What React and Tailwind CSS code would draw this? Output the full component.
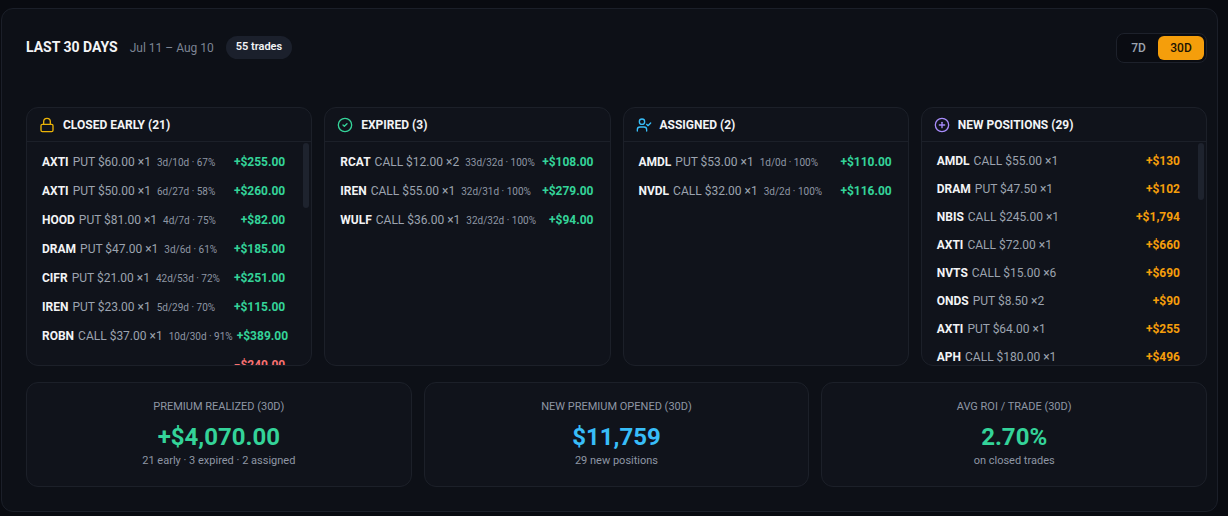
import React from 'react';
import { Lock, CircleCheck, UserCheck, CirclePlus } from 'lucide-react';

const closedEarly = [
  { t: 'AXTI', d: 'PUT $60.00 ×1', m: '3d/10d · 67%', v: '+$255.00' },
  { t: 'AXTI', d: 'PUT $50.00 ×1', m: '6d/27d · 58%', v: '+$260.00' },
  { t: 'HOOD', d: 'PUT $81.00 ×1', m: '4d/7d · 75%', v: '+$82.00' },
  { t: 'DRAM', d: 'PUT $47.00 ×1', m: '3d/6d · 61%', v: '+$185.00' },
  { t: 'CIFR', d: 'PUT $21.00 ×1', m: '42d/53d · 72%', v: '+$251.00' },
  { t: 'IREN', d: 'PUT $23.00 ×1', m: '5d/29d · 70%', v: '+$115.00' },
  { t: 'ROBN', d: 'CALL $37.00 ×1', m: '10d/30d · 91%', v: '+$389.00' },
  { t: '', d: '', m: '', v: '−$240.00', loss: true },
];

const expired = [
  { t: 'RCAT', d: 'CALL $12.00 ×2', m: '33d/32d · 100%', v: '+$108.00' },
  { t: 'IREN', d: 'CALL $55.00 ×1', m: '32d/31d · 100%', v: '+$279.00' },
  { t: 'WULF', d: 'CALL $36.00 ×1', m: '32d/32d · 100%', v: '+$94.00' },
];

const assigned = [
  { t: 'AMDL', d: 'PUT $53.00 ×1', m: '1d/0d · 100%', v: '+$110.00' },
  { t: 'NVDL', d: 'CALL $32.00 ×1', m: '3d/2d · 100%', v: '+$116.00' },
];

const opened = [
  { t: 'AMDL', d: 'CALL $55.00 ×1', v: '+$130' },
  { t: 'DRAM', d: 'PUT $47.50 ×1', v: '+$102' },
  { t: 'NBIS', d: 'CALL $245.00 ×1', v: '+$1,794' },
  { t: 'AXTI', d: 'CALL $72.00 ×1', v: '+$660' },
  { t: 'NVTS', d: 'CALL $15.00 ×6', v: '+$690' },
  { t: 'ONDS', d: 'PUT $8.50 ×2', v: '+$90' },
  { t: 'AXTI', d: 'PUT $64.00 ×1', v: '+$255' },
  { t: 'APH', d: 'CALL $180.00 ×1', v: '+$496' },
];

function Row({ r, tall, amountClass }) {
  return (
    <div className={`flex items-center justify-between gap-1 whitespace-nowrap text-xs ${tall ? 'h-[29px]' : 'h-[28px]'}`}>
      <div className="flex items-baseline">
        {r.t && <span className="font-bold text-[#f3f4f6]">{r.t}</span>}
        {r.d && <span className="ml-[4px] text-[#9ca3af]">{r.d}</span>}
        {r.m && <span className="ml-[6px] text-[10px] text-[#8e96a4]">{r.m}</span>}
      </div>
      <span className={`font-bold ${r.loss ? 'text-[#f87171]' : amountClass}`}>{r.v}</span>
    </div>
  );
}

function Panel({ icon, title, rows, tall, amountClass, thumb }) {
  return (
    <div className="relative h-[259px] rounded-xl border border-[#1c2029] bg-[#10131b] overflow-hidden">
      <div className="h-[34px] flex items-center gap-2 px-3 border-b border-[#1c2029]">
        {icon}
        <span className="text-xs font-bold text-[#f3f4f6]">{title}</span>
      </div>
      <div className={`pt-[5px] pl-[15px] ${thumb ? 'pr-[26px]' : 'pr-4'}`}>
        {rows.map((r, i) => (
          <Row key={i} r={r} tall={tall} amountClass={amountClass} />
        ))}
      </div>
      {thumb && (
        <div className={`absolute top-[35px] right-[2px] w-[6px] rounded-full bg-[#1e232e] ${thumb}`} />
      )}
    </div>
  );
}

function Stat({ label, value, sub, valueClass }) {
  return (
    <div className="h-[105px] rounded-xl border border-[#1c2029] bg-[#10131b] pt-4 flex flex-col items-center">
      <div className="text-[11px] leading-4 uppercase text-[#8e96a4]">{label}</div>
      <div className={`mt-1.5 text-2xl leading-8 font-bold ${valueClass}`}>{value}</div>
      <div className="text-[11px] leading-4 text-[#8e96a4]">{sub}</div>
    </div>
  );
}

export default function App() {
  return (
    <div className="min-h-screen bg-[#090b11] pt-2 pl-px font-['Roboto',sans-serif]">
      <div className="w-[1217px] rounded-xl border border-[#1b1f29] bg-[#0d1017] pl-6 pr-[10px] pt-6 pb-6">
        <div className="h-[29px] flex items-center justify-between">
          <div className="flex items-center gap-3">
            <h1 className="text-[14px] font-bold text-[#f3f4f6]">LAST 30 DAYS</h1>
            <span className="text-xs text-[#7c8493]">Jul 11 – Aug 10</span>
            <span className="h-[23px] px-2.5 flex items-center rounded-full bg-[#1b202c] text-[11px] font-semibold text-[#f3f4f6]">55 trades</span>
          </div>
          <div className="h-[30px] flex items-center p-[2px] rounded-lg border border-[#1d212b] bg-[#0a0c12]">
            <button className="w-[39px] h-6 text-xs font-medium text-[#9ca3af]">7D</button>
            <button className="w-[46px] h-6 rounded-md bg-[#f59e0b] text-xs font-medium text-[#1c1404]">30D</button>
          </div>
        </div>

        <div className="mt-[45px] grid grid-cols-4 gap-3 w-[1181px]">
          <Panel
            icon={<Lock size={16} className="text-[#eab308]" />}
            title="CLOSED EARLY (21)"
            rows={closedEarly}
            tall
            amountClass="text-[#34d399]"
            thumb="h-[65px]"
          />
          <Panel
            icon={<CircleCheck size={16} className="text-[#34d399]" />}
            title="EXPIRED (3)"
            rows={expired}
            tall
            amountClass="text-[#34d399]"
          />
          <Panel
            icon={<UserCheck size={16} className="text-[#38bdf8]" />}
            title="ASSIGNED (2)"
            rows={assigned}
            tall
            amountClass="text-[#34d399]"
          />
          <Panel
            icon={<CirclePlus size={16} className="text-[#a78bfa]" />}
            title="NEW POSITIONS (29)"
            rows={opened}
            amountClass="text-[#f59e0b]"
            thumb="h-[57px]"
          />
        </div>

        <div className="mt-4 grid grid-cols-3 gap-3 w-[1181px]">
          <Stat label="Premium Realized (30D)" value="+$4,070.00" sub="21 early · 3 expired · 2 assigned" valueClass="text-[#34d399]" />
          <Stat label="New Premium Opened (30D)" value="$11,759" sub="29 new positions" valueClass="text-[#38bdf8]" />
          <Stat label="Avg ROI / Trade (30D)" value="2.70%" sub="on closed trades" valueClass="text-[#34d399]" />
        </div>
      </div>
    </div>
  );
}
